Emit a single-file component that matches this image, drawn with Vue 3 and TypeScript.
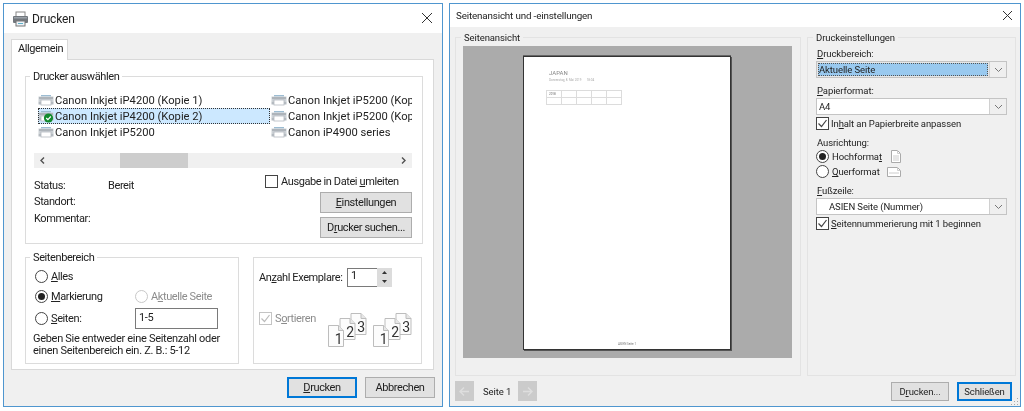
<script setup lang="ts">
const printers = [
  { name: 'Canon Inkjet iP4200 (Kopie 1)' },
  { name: 'Canon Inkjet iP5200 (Kopie 1)' },
  { name: 'Canon Inkjet iP4200 (Kopie 2)', selected: true },
  { name: 'Canon Inkjet iP5200 (Kopie 2)' },
  { name: 'Canon Inkjet iP5200' },
  { name: 'Canon iP4900 series' },
]
const tableCells = ['2018', '', '', '', '', '', '', '', '', '']
const collatePages = [
  { n: '3', x: 23, y: 0.5 },
  { n: '2', x: 12, y: 5.5 },
  { n: '1', x: 0.5, y: 12.5 },
]
</script>

<template>
  <div class="stage">
    <!-- Drucken -->
    <section class="win win-print">
      <header class="title title-print">
        <svg class="title-icon" width="17" height="16" viewBox="0 0 17 16">
          <rect x="4" y="1" width="9" height="5" fill="#fff" stroke="#888" />
          <rect x="1" y="5" width="15" height="7" rx="1" fill="#72777d" />
          <rect x="2" y="6" width="13" height="1.5" fill="#9aa1a8" />
          <rect x="4" y="10" width="9" height="5" fill="#eef3f8" stroke="#777" />
          <rect x="6" y="12" width="5" height="1" fill="#5fb0c8" />
        </svg>
        <span>Drucken</span>
        <svg class="close close-print" width="12" height="12" viewBox="0 0 12 12">
          <path d="M1 1l10 10M11 1L1 11" stroke="#333" stroke-width="1" fill="none" />
        </svg>
      </header>
      <div class="body-print">
        <div class="tab">Allgemein</div>
        <div class="panel">
          <div class="group group-select">
            <span class="legend">Drucker auswählen</span>
            <div class="printers">
              <div v-for="p in printers" :key="p.name" class="printer" :class="{ selected: p.selected }">
                <svg class="printer-icon" width="16" height="13" viewBox="0 0 16 13">
                  <rect x="3" y="1" width="10" height="1.5" fill="#9cbcd2" />
                  <rect x="0.5" y="2.5" width="15" height="5" fill="#ccd1d6" />
                  <rect x="1" y="3.5" width="14" height="1" fill="#8f979e" />
                  <rect x="3" y="6" width="10" height="5" fill="#fff" stroke="#b4bac0" stroke-width="0.8" />
                  <rect x="0.5" y="7.5" width="2.5" height="3" fill="#b4bac0" />
                  <rect x="13" y="7.5" width="2.5" height="3" fill="#b4bac0" />
                  <template v-if="p.selected">
                    <circle cx="10.5" cy="8" r="4.6" fill="#128a2e" />
                    <path d="M8.2 8l1.7 1.7 2.9-3.2" stroke="#fff" stroke-width="1.2" fill="none" />
                  </template>
                </svg>
                <span class="printer-name">{{ p.name }}</span>
              </div>
            </div>
            <div class="hscroll">
              <svg class="arrow" width="17" height="15" viewBox="0 0 17 15">
                <path d="M10 4.5L7 7.5l3 3" stroke="#505050" stroke-width="1.4" fill="none" />
              </svg>
              <span class="track-a"></span>
              <span class="thumb"></span>
              <span class="track-b"></span>
              <svg class="arrow" width="17" height="15" viewBox="0 0 17 15">
                <path d="M7 4.5l3 3-3 3" stroke="#505050" stroke-width="1.4" fill="none" />
              </svg>
            </div>
            <div class="info">
              <dl class="details">
                <dt>Status:</dt><dd>Bereit</dd>
                <dt>Standort:</dt><dd></dd>
                <dt>Kommentar:</dt><dd></dd>
              </dl>
              <div class="info-actions">
                <label class="check-row">
                  <span class="check"></span>
                  <span>Ausgabe in Datei <u>u</u>mleiten</span>
                </label>
                <button class="btn btn-side"><u>E</u>instellungen</button>
                <button class="btn btn-side">D<u>r</u>ucker suchen...</button>
              </div>
            </div>
          </div>

          <div class="lower">
            <div class="group group-range">
              <span class="legend">Seitenbereich</span>
              <div class="range-row">
                <span class="radio-line"><span class="radio"></span><span><u>A</u>lles</span></span>
              </div>
              <div class="range-row">
                <span class="radio-line"><span class="radio on"></span><span><u>M</u>arkierung</span></span>
                <span class="radio-line muted"><span class="radio off"></span><span>A<u>k</u>tuelle Seite</span></span>
              </div>
              <div class="range-row row-pages">
                <span class="radio-line"><span class="radio"></span><span><u>S</u>eiten:</span></span>
                <span class="pages-input">1-5</span>
              </div>
              <p class="hint">Geben Sie entweder eine Seitenzahl oder<br />einen Seitenbereich ein. Z. B.: 5-12</p>
            </div>

            <div class="group group-copies">
              <div class="copies-row">
                <span class="copies-label">An<u>z</u>ahl Exemplare:</span>
                <span class="copies-input">1</span>
                <span class="spinner">
                  <svg width="15" height="9" viewBox="0 0 15 9"><path d="M7.5 3L5 6h5z" fill="#333" /></svg>
                  <svg width="15" height="9" viewBox="0 0 15 9"><path d="M7.5 6L5 3h5z" fill="#333" /></svg>
                </span>
              </div>
              <div class="collate">
                <label class="check-row muted sort-label">
                  <span class="check disabled">
                    <svg width="11" height="11" viewBox="0 0 11 11"><path d="M1.5 5.5l3 3 5-6.5" stroke="#bbb" stroke-width="1.2" fill="none" /></svg>
                  </span>
                  <span>S<u>o</u>rtieren</span>
                </label>
                <svg v-for="n in 2" :key="n" class="collate-icon" width="40" height="35" viewBox="0 0 40 35">
                  <g v-for="p in collatePages" :key="p.n">
                    <path :d="`M${p.x} ${p.y}h10l5 5v16h-15z`" fill="#fcfcfc" stroke="#bdbdbd" />
                    <path :d="`M${p.x + 10} ${p.y}v5h5`" fill="#e6e6e6" stroke="#bdbdbd" />
                    <text :x="p.x + 10" :y="p.y + 18.5" class="collate-num">{{ p.n }}</text>
                  </g>
                </svg>
              </div>
            </div>
          </div>
        </div>
        <footer class="foot-print">
          <button class="btn btn-foot primary"><u>D</u>rucken</button>
          <button class="btn btn-foot">Abbrechen</button>
        </footer>
      </div>
    </section>

    <!-- Seitenansicht und -einstellungen -->
    <section class="win win-preview">
      <header class="title title-preview">
        <span>Seitenansicht und -einstellungen</span>
        <svg class="close" width="11" height="11" viewBox="0 0 11 11">
          <path d="M1 1l9 9M10 1l-9 9" stroke="#333" stroke-width="1" fill="none" />
        </svg>
      </header>
      <div class="body-preview">
        <div class="preview-cols">
          <div class="group group-preview">
            <span class="legend legend-grey">Seitenansicht</span>
            <div class="canvas">
              <div class="sheet">
                <div class="sheet-title">JAPAN</div>
                <div class="sheet-sub">Donnerstag, 8. Mai 2019 &nbsp; &nbsp; &nbsp; 18:04</div>
                <div class="sheet-table">
                  <span v-for="(c, i) in tableCells" :key="i">{{ c }}</span>
                </div>
                <div class="sheet-foot">ASIEN Seite 1</div>
              </div>
            </div>
          </div>

          <div class="group group-settings">
            <span class="legend legend-grey">Druckeinstellungen</span>
            <div class="field-label"><u>D</u>ruckbereich:</div>
            <div class="select select-active">
              <span class="select-value">Aktuelle Seite</span>
              <span class="select-arrow"><svg width="9" height="6" viewBox="0 0 9 6"><path d="M1 1l3.5 3.5L8 1" stroke="#777" fill="none" /></svg></span>
            </div>
            <div class="field-label label-gap"><u>P</u>apierformat:</div>
            <div class="select">
              <span class="select-value">A4</span>
              <span class="select-arrow"><svg width="9" height="6" viewBox="0 0 9 6"><path d="M1 1l3.5 3.5L8 1" stroke="#777" fill="none" /></svg></span>
            </div>
            <label class="check-row settings-check">
              <span class="check">
                <svg width="11" height="11" viewBox="0 0 11 11"><path d="M1.5 5.5l3 3 5-6.5" stroke="#444" stroke-width="1.2" fill="none" /></svg>
              </span>
              <span>In<u>h</u>alt an Papierbreite anpassen</span>
            </label>
            <div class="field-label label-gap">Ausrichtung:</div>
            <div class="orient">
              <span class="radio on"></span>
              <span class="orient-name">Hochforma<u>t</u></span>
              <svg width="10" height="13" viewBox="0 0 10 13"><path d="M.5.5h6l3 3v9h-9z" fill="#fff" stroke="#aaa" /><path d="M6.5.5v3h3M2 6h6M2 8h6M2 10h6" fill="none" stroke="#ccc" /></svg>
            </div>
            <div class="orient orient-second">
              <span class="radio"></span>
              <span class="orient-name"><u>Q</u>uerformat</span>
              <svg width="14" height="10" viewBox="0 0 14 10"><path d="M.5.5h10l3 3v6H.5z" fill="#fff" stroke="#aaa" /><path d="M10.5.5v3h3M2 6h10" fill="none" stroke="#ccc" /></svg>
            </div>
            <div class="field-label label-gap"><u>F</u>ußzeile:</div>
            <div class="select">
              <span class="select-value select-indent">ASIEN Seite (Nummer)</span>
              <span class="select-arrow"><svg width="9" height="6" viewBox="0 0 9 6"><path d="M1 1l3.5 3.5L8 1" stroke="#777" fill="none" /></svg></span>
            </div>
            <label class="check-row settings-check">
              <span class="check">
                <svg width="11" height="11" viewBox="0 0 11 11"><path d="M1.5 5.5l3 3 5-6.5" stroke="#444" stroke-width="1.2" fill="none" /></svg>
              </span>
              <span><u>S</u>eitennummerierung mit 1 beginnen</span>
            </label>
          </div>
        </div>

        <footer class="foot-preview">
          <span class="nav-btn">
            <svg width="11" height="9" viewBox="0 0 11 9"><path d="M5 .5L1 4.5l4 4M1 4.5h9" stroke="#dedede" stroke-width="1.4" fill="none" /></svg>
          </span>
          <span class="page-label">Seite 1</span>
          <span class="nav-btn">
            <svg width="11" height="9" viewBox="0 0 11 9"><path d="M6 .5l4 4-4 4M10 4.5H1" stroke="#dedede" stroke-width="1.4" fill="none" /></svg>
          </span>
          <button class="btn btn-pre push">D<u>r</u>ucken...</button>
          <button class="btn btn-pre primary btn-close">Schließen</button>
        </footer>
        <svg class="grip" width="8" height="8" viewBox="0 0 8 8">
          <path d="M6 1h1v1H6zM3 4h1v1H3zM6 4h1v1H6zM0 7h1v1H0zM3 7h1v1H3zM6 7h1v1H6z" fill="#a8a8a8" />
        </svg>
      </div>
    </section>
  </div>
</template>

<style scoped>
.stage {
  display: flex;
  gap: 6px;
  width: 1024px;
  height: 411px;
  padding: 3px 3px 0;
  box-sizing: border-box;
  background: #fff;
  font-family: Roboto, 'Open Sans', sans-serif;
  font-size: 11px;
  letter-spacing: -0.4px;
  color: #222;
  filter: blur(0.45px);
  overflow: hidden;
}

u {
  text-underline-offset: 1px;
}

.win {
  display: flex;
  flex-direction: column;
  box-sizing: border-box;
  border: 1px solid #4f96cf;
  background: #fff;
}

.win-print {
  width: 440px;
  height: 404px;
}

.win-preview {
  width: 572px;
  height: 404px;
}

.title {
  display: flex;
  align-items: center;
  flex: none;
  background: #fff;
}

.title-print {
  height: 29px;
  padding: 0 9px 0 8px;
  font-size: 12px;
  letter-spacing: -0.15px;
}

.title-icon {
  margin-right: 3px;
}

.close {
  margin-left: auto;
}

.close-print {
  margin-top: -2px;
}

.title-preview {
  height: 23px;
  padding: 0 7px 0 6px;
  font-size: 9.8px;
  letter-spacing: -0.15px;
}

.body-print {
  flex: 1;
  display: flex;
  flex-direction: column;
  padding: 6px 8px 0 7px;
  background: #f0f0f0;
}

.tab {
  align-self: flex-start;
  box-sizing: border-box;
  width: 57px;
  height: 21px;
  margin-bottom: -1px;
  padding: 2px 0 0 6px;
  border: 1px solid #d9d9d9;
  border-bottom: none;
  background: #fff;
  position: relative;
  z-index: 1;
}

.panel {
  box-sizing: border-box;
  height: 311px;
  padding: 16px 10px 0 13px;
  border: 1px solid #d9d9d9;
  background: #fff;
}

.group {
  position: relative;
  box-sizing: border-box;
  border: 1px solid #dcdcdc;
}

.legend {
  position: absolute;
  top: -8px;
  left: 4px;
  padding: 0 3px;
  background: #fff;
  line-height: 15px;
}

.legend-grey {
  left: 5px;
  background: #f0f0f0;
}

.group-select {
  height: 168px;
}

.printers {
  display: grid;
  grid-template-columns: 233px 141px;
  grid-auto-rows: 16px;
  margin: 15px 0 0 12px;
  width: 374px;
  overflow: hidden;
}

.printer {
  display: flex;
  align-items: center;
  gap: 1px;
  min-width: 0;
  white-space: nowrap;
  overflow: hidden;
  font-size: 11.2px;
  letter-spacing: 0;
}

.printer.selected {
  box-sizing: border-box;
  margin-right: 1px;
  background: #cce8ff;
  outline: 1px dotted #333;
  outline-offset: -1px;
}

.printer-icon {
  flex: none;
}

.hscroll {
  display: flex;
  align-items: center;
  width: 378px;
  height: 15px;
  margin: 13px 0 0 8px;
  background: #f0f0f0;
}

.arrow {
  flex: none;
}

.track-a {
  width: 69px;
}

.thumb {
  width: 68px;
  height: 15px;
  background: #cdcdcd;
}

.track-b {
  flex: 1;
}

.info {
  display: flex;
  justify-content: space-between;
  padding: 7px 10px 0 8px;
}

.details {
  display: grid;
  grid-template-columns: 74px 1fr;
  grid-auto-rows: 16.5px;
  align-items: center;
  align-content: start;
  margin: 2px 0 0;
}

.details dd {
  margin: 0;
}

.info-actions {
  display: flex;
  flex-direction: column;
  align-items: flex-end;
  width: 147px;
}

.check-row {
  display: flex;
  align-items: center;
  gap: 3px;
  height: 13px;
  white-space: nowrap;
}

.info-actions .check-row {
  align-self: flex-start;
  margin-bottom: 4px;
}

.check {
  display: flex;
  align-items: center;
  justify-content: center;
  flex: none;
  box-sizing: border-box;
  width: 13px;
  height: 13px;
  border: 1px solid #444;
  background: #fff;
}

.check.disabled {
  border-color: #c4c4c4;
}

.btn {
  box-sizing: border-box;
  padding: 0;
  border: 1px solid #adadad;
  background: #e1e1e1;
  color: #222;
  font: inherit;
  letter-spacing: inherit;
  white-space: nowrap;
}

.btn-side {
  width: 92px;
  height: 21px;
  margin-bottom: 4px;
}

.lower {
  display: flex;
  gap: 14px;
  margin-top: 13px;
}

.group-range {
  width: 214px;
  height: 107px;
  padding-top: 8px;
}

.range-row {
  display: grid;
  grid-template-columns: 100px 1fr;
  align-items: center;
  height: 20px;
  padding-left: 9px;
}

.row-pages {
  height: 22px;
  margin-top: 1px;
}

.radio-line {
  display: flex;
  align-items: center;
  gap: 3px;
}

.radio {
  position: relative;
  flex: none;
  box-sizing: border-box;
  width: 13px;
  height: 13px;
  border: 1px solid #444;
  border-radius: 50%;
  background: #fff;
}

.radio.on::after {
  content: '';
  position: absolute;
  inset: 2px;
  border-radius: 50%;
  background: #222;
}

.radio.off {
  border-color: #c8c8c8;
}

.muted {
  color: #8c8c8c;
}

.pages-input {
  box-sizing: border-box;
  width: 83px;
  height: 21px;
  padding: 2px 0 0 3px;
  border: 1px solid #7a7a7a;
}

.hint {
  margin: 4px 0 0;
  padding-left: 7px;
  line-height: 12px;
  letter-spacing: -0.3px;
  white-space: nowrap;
}

.group-copies {
  width: 169px;
  height: 107px;
  padding: 10px 0 0 5px;
}

.copies-row {
  display: flex;
  align-items: center;
  height: 19px;
}

.copies-label {
  width: 88px;
  white-space: nowrap;
}

.copies-input {
  box-sizing: border-box;
  width: 30px;
  height: 19px;
  padding-left: 3px;
  border: 1px solid #7a7a7a;
  border-right: none;
}

.spinner {
  display: flex;
  flex-direction: column;
  width: 15px;
  height: 19px;
  background: #dcdcdc;
}

.collate {
  display: flex;
  gap: 5px;
  margin-top: 26px;
}

.sort-label {
  width: 64px;
  margin-top: -1px;
}

.collate-icon {
  flex: none;
}

.collate-num {
  font: 14px Roboto, sans-serif;
  fill: #333;
  text-anchor: middle;
}

.foot-print {
  flex: 1;
  display: flex;
  justify-content: flex-end;
  gap: 8px;
  padding-top: 7px;
  margin-right: -1px;
}

.btn-foot {
  width: 70px;
  height: 21px;
}

.primary {
  border: 2px solid #0078d7;
}

.body-preview {
  position: relative;
  flex: 1;
  display: flex;
  flex-direction: column;
  padding: 10px 0 0 5px;
  background: #f0f0f0;
  font-size: 9.5px;
  letter-spacing: -0.1px;
}

.preview-cols {
  display: flex;
  gap: 6px;
}

.group-preview {
  width: 346px;
  height: 339px;
  padding: 8px 0 0 7px;
  border-color: #e3e3e3;
}

.canvas {
  display: flex;
  justify-content: flex-start;
  box-sizing: border-box;
  width: 329px;
  height: 312px;
  padding: 10px 0 0 60px;
  background: #ababab;
}

.sheet {
  display: flex;
  flex-direction: column;
  box-sizing: border-box;
  width: 208px;
  height: 294px;
  padding: 12px 0 2px 25px;
  border: 1px solid #333;
  background: #fff;
  box-shadow: 1px 1px 0 #555, 0 -1px 0 #666;
  color: #888;
}

.sheet-title {
  font-size: 6px;
  line-height: 8px;
  letter-spacing: 0;
}

.sheet-sub {
  margin-top: 1px;
  font-size: 3px;
  line-height: 5px;
  color: #aaa;
  letter-spacing: 0;
}

.sheet-table {
  display: grid;
  grid-template-columns: repeat(5, 1fr);
  grid-auto-rows: 7px;
  width: 75px;
  margin: 7px 0 0 -3px;
  border: 1px solid #dcdcdc;
  border-width: 1px 0 0 1px;
  font-size: 3px;
  line-height: 6px;
  color: #666;
  letter-spacing: 0;
}

.sheet-table span {
  border: 1px solid #dcdcdc;
  border-width: 0 1px 1px 0;
  padding-left: 2px;
}

.sheet-foot {
  margin: auto 0 0 -25px;
  font-size: 3px;
  line-height: 5px;
  text-align: center;
  color: #777;
  letter-spacing: 0;
}

.group-settings {
  width: 209px;
  height: 339px;
  padding: 9px 0 0 8px;
  border-color: #e3e3e3;
}

.field-label {
  height: 14px;
  line-height: 14px;
  padding-left: 1px;
}

.label-gap {
  margin-top: 6px;
}

.select {
  display: flex;
  box-sizing: border-box;
  width: 191px;
  height: 17px;
  border: 1px solid #c4c4c4;
  background: #fff;
}

.select-active {
  background: #e6e6e6;
}

.select-value {
  flex: 1;
  padding-left: 2px;
  line-height: 15px;
  white-space: nowrap;
}

.select-active .select-value {
  margin: 1px;
  padding-left: 1px;
  line-height: 13px;
  background: #99c9ef;
  outline: 1px dotted #555;
  outline-offset: -1px;
}

.select-indent {
  padding-left: 12px;
}

.select-arrow {
  display: flex;
  align-items: center;
  justify-content: center;
  flex: none;
  width: 16px;
  background: #efefef;
  border-left: 1px solid #d0d0d0;
}

.settings-check {
  margin-top: 2px;
  gap: 2px;
}

.orient {
  display: flex;
  align-items: center;
  gap: 3px;
  height: 13px;
}

.orient .orient-name {
  width: 56px;
  white-space: nowrap;
}

.orient-second {
  margin-top: 2px;
}

.orient-second .orient-name {
  width: 52px;
}

.foot-preview {
  display: flex;
  align-items: center;
  margin-top: 5px;
}

.nav-btn {
  display: flex;
  align-items: center;
  justify-content: center;
  width: 19px;
  height: 20px;
  background: #cbcbcb;
}

.page-label {
  width: 44px;
  padding-left: 9px;
  box-sizing: border-box;
}

.btn-pre {
  width: 58px;
  height: 19px;
}

.push {
  margin-left: auto;
}

.btn-close {
  width: 55px;
  margin: 0 8px;
}

.grip {
  position: absolute;
  right: 1px;
  bottom: 1px;
}
</style>

<style>
html,
body {
  margin: 0;
  background: #fff;
}
</style>
